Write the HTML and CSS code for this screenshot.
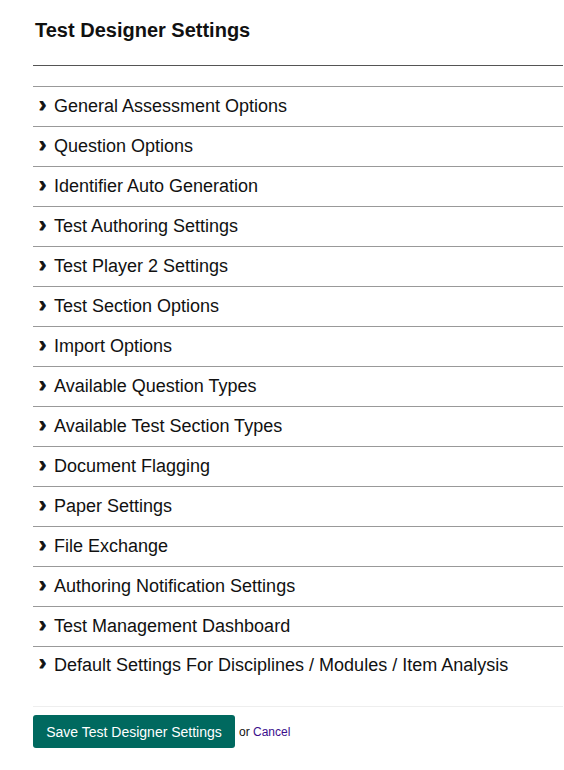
FILE: index.html
```html
<!DOCTYPE html>
<html>
<head>
<meta charset="utf-8">
<link rel="stylesheet" href="styles.css">
</head>
<body>
<div class="page">
  <h1 class="title">Test Designer Settings</h1>
  <div class="sections">
    <div class="row"><span class="chev">&#x203A;</span>General Assessment Options</div>
    <div class="row"><span class="chev">&#x203A;</span>Question Options</div>
    <div class="row"><span class="chev">&#x203A;</span>Identifier Auto Generation</div>
    <div class="row"><span class="chev">&#x203A;</span>Test Authoring Settings</div>
    <div class="row"><span class="chev">&#x203A;</span>Test Player 2 Settings</div>
    <div class="row"><span class="chev">&#x203A;</span>Test Section Options</div>
    <div class="row"><span class="chev">&#x203A;</span>Import Options</div>
    <div class="row"><span class="chev">&#x203A;</span>Available Question Types</div>
    <div class="row"><span class="chev">&#x203A;</span>Available Test Section Types</div>
    <div class="row"><span class="chev">&#x203A;</span>Document Flagging</div>
    <div class="row"><span class="chev">&#x203A;</span>Paper Settings</div>
    <div class="row"><span class="chev">&#x203A;</span>File Exchange</div>
    <div class="row"><span class="chev">&#x203A;</span>Authoring Notification Settings</div>
    <div class="row"><span class="chev">&#x203A;</span>Test Management Dashboard</div>
    <div class="row last"><span class="chev">&#x203A;</span>Default Settings For Disciplines / Modules / Item Analysis</div>
  </div>
  <div class="actions">
    <button class="save">Save Test Designer Settings</button>
    <span class="or">or <a class="cancel" href="#">Cancel</a></span>
  </div>
</div>
</body>
</html>
```
FILE: styles.css
```css
html, body {
  margin: 0;
  padding: 0;
  background: #fff;
}
.page {
  font-family: "Liberation Sans", Arial, sans-serif;
  color: #111;
  padding: 0 1px 0 33px;
}
.title {
  margin: 0;
  padding: 19px 0 0 2px;
  height: 66px;
  box-sizing: border-box;
  font-size: 20px;
  font-weight: bold;
  line-height: 23px;
  border-bottom: 1px solid #555;
}
.sections {
  margin-top: 20px;
  border-bottom: 1px solid #eee;
}
.row {
  height: 40px;
  box-sizing: border-box;
  border-top: 1px solid #999;
  display: flex;
  align-items: center;
  padding: 0 0 0 6px;
  font-size: 18px;
  color: #111;
}
.row.last {
  height: 60px;
  align-items: flex-start;
  padding-top: 8px;
}
.chev {
  font-weight: bold;
  font-size: 22px;
  width: 15px;
  line-height: 20px;
  position: relative;
  top: -2px;
  -webkit-text-stroke: 0.8px #111;
}
.actions {
  display: flex;
  align-items: center;
  margin-top: 8px;
  gap: 4px;
}
.save {
  background: #00695f;
  color: #fff;
  border: none;
  border-radius: 3px;
  height: 33px;
  width: 202px;
  font-family: "Liberation Sans", Arial, sans-serif;
  font-size: 14px;
  padding: 0;
}
.or {
  font-size: 12px;
  color: #111;
}
.cancel {
  color: #3b0e8c;
  text-decoration: none;
}
```
